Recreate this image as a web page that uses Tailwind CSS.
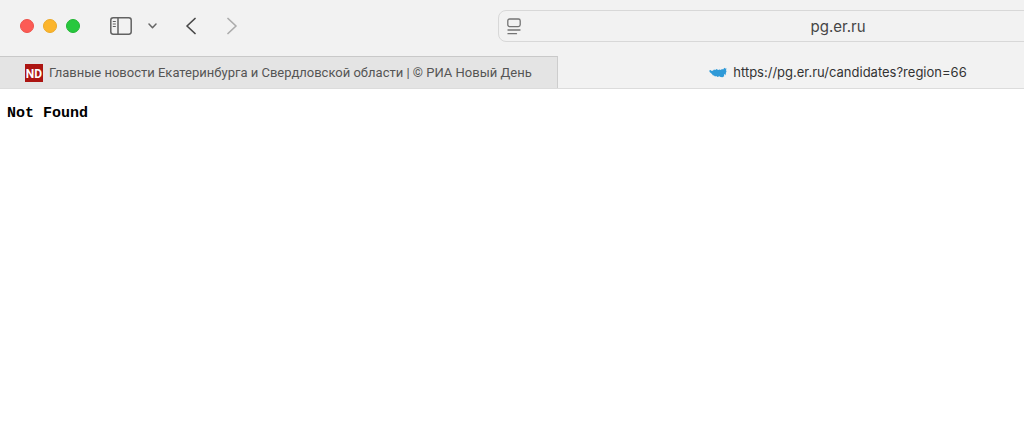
<!DOCTYPE html>
<html lang="ru">
<head>
<meta charset="utf-8">
<meta name="viewport" content="width=device-width, initial-scale=1">
<title>pg.er.ru</title>
<script src="https://cdn.jsdelivr.net/npm/@tailwindcss/browser@4"></script>
</head>
<body class="flex min-h-screen flex-col overflow-x-hidden bg-white font-['Inter',sans-serif]">
<header class="overflow-hidden bg-[#f2f2f2]">
  <div class="flex h-14 items-center pb-1">
    <div class="ml-5 flex gap-[9px]">
      <button aria-label="Close" class="size-[14px] rounded-full border border-[#ee514a] bg-[#fc5b55]"></button>
      <button aria-label="Minimize" class="size-[14px] rounded-full border border-[#eba928] bg-[#fcb52c]"></button>
      <button aria-label="Zoom" class="size-[14px] rounded-full border border-[#22b534] bg-[#27c83d]"></button>
    </div>
    <button aria-label="Sidebar" class="ml-[30px]">
      <svg class="h-[18px] w-[22px]" viewBox="0 0 22 18" fill="none" stroke="#626262" stroke-width="1.5"><rect x=".8" y=".8" width="20.4" height="16.4" rx="2.4"/><path d="M8 1v16"/><path d="M2.8 4.5h3M2.8 7h3M2.8 9.5h3" stroke-width="1.1"/></svg>
    </button>
    <div class="ml-2 h-5 w-px bg-[#e0e0e0]"></div>
    <button aria-label="Tab groups" class="ml-2">
      <svg class="h-[6px] w-[9px]" viewBox="0 0 9 6" fill="none" stroke="#666" stroke-width="1.5" stroke-linecap="round" stroke-linejoin="round"><path d="M1 1l3.5 3.7L8 1"/></svg>
    </button>
    <button aria-label="Back" class="ml-[29px]">
      <svg class="h-[18px] w-[10px]" viewBox="0 0 10 18" fill="none" stroke="#484848" stroke-width="1.7" stroke-linecap="round" stroke-linejoin="round"><path d="M9 1.5L1 9l8 7.5"/></svg>
    </button>
    <button aria-label="Forward" class="ml-[31px]">
      <svg class="h-[18px] w-[10px]" viewBox="0 0 10 18" fill="none" stroke="#acacac" stroke-width="1.7" stroke-linecap="round" stroke-linejoin="round"><path d="M1 1.5L9 9l-8 7.5"/></svg>
    </button>
    <div class="ml-[261px] flex h-8 w-[680px] shrink-0 items-center rounded-lg border border-[#d8d8d8] bg-[#f2f2f2] px-2">
      <button aria-label="Page menu">
        <svg class="h-[17px] w-[14px]" viewBox="0 0 14 17" fill="none" stroke="#747474" stroke-width="1.3" stroke-linecap="round"><rect x=".8" y="1" width="12.4" height="7.6" rx="1.8"/><path d="M1 12h12M1 15.7h8.5"/></svg>
      </button>
      <input aria-label="Address" value="pg.er.ru" class="mr-[14px] min-w-0 grow bg-transparent pt-0.5 text-center text-[15px] text-[#454545] outline-none">
    </div>
  </div>
  <nav aria-label="Tabs" class="flex h-[33px] border-b border-[#dcdcdc]">
    <a href="#news" class="flex w-[558px] shrink-0 items-center gap-[6px] border-t border-r border-t-[#c9c9c9] border-r-[#cdcdcd] bg-[#e4e4e4] pl-[25px] font-['Roboto',sans-serif] text-[13px] whitespace-nowrap text-[#555]">
      <svg class="size-[18px] shrink-0" viewBox="0 0 18 18"><path fill="#ac1512" d="M0 0h18v18H0z"/><text x="9" y="13.5" text-anchor="middle" fill="#fff" font-family="Roboto, sans-serif" font-size="12" font-weight="700">ND</text></svg>
      <span class="pt-px">Главные новости Екатеринбурга и Свердловской области | © РИА Новый День</span>
    </a>
    <a href="#page" aria-current="page" class="flex w-[560px] shrink-0 items-center justify-center gap-[6px] pt-px text-[13px] whitespace-nowrap text-[#333]">
      <svg class="h-[11px] w-[18px]" viewBox="0 0 18 11"><path fill="#2f9ad8" d="M.3 3.6L1.6 3l1.2.9 1.3-.4L5 2.4l1.2.6 1.4-.9 1.5.9 1.6-.5 1.2.4 1-.9 1.3.4L15.3.8l.9.8 1.4-.2-.6 1.5.5 1.7-.7 1.4.2 2.4-1-1.3-1 .6.2 1.6-1.7.9-1.9-.1-1.3-.9-1.8.8-1.3-.9-1.2.4-1-.9-1.3-.3-.7-1.3L.6 5z"/></svg>
      <span>https://pg.er.ru/candidates?region=66</span>
    </a>
  </nav>
</header>
<main class="px-[7px] py-4">
  <pre class="font-['Liberation_Mono',monospace] text-[15px] leading-[18px] font-bold text-black">Not Found</pre>
</main>
</body>
</html>
